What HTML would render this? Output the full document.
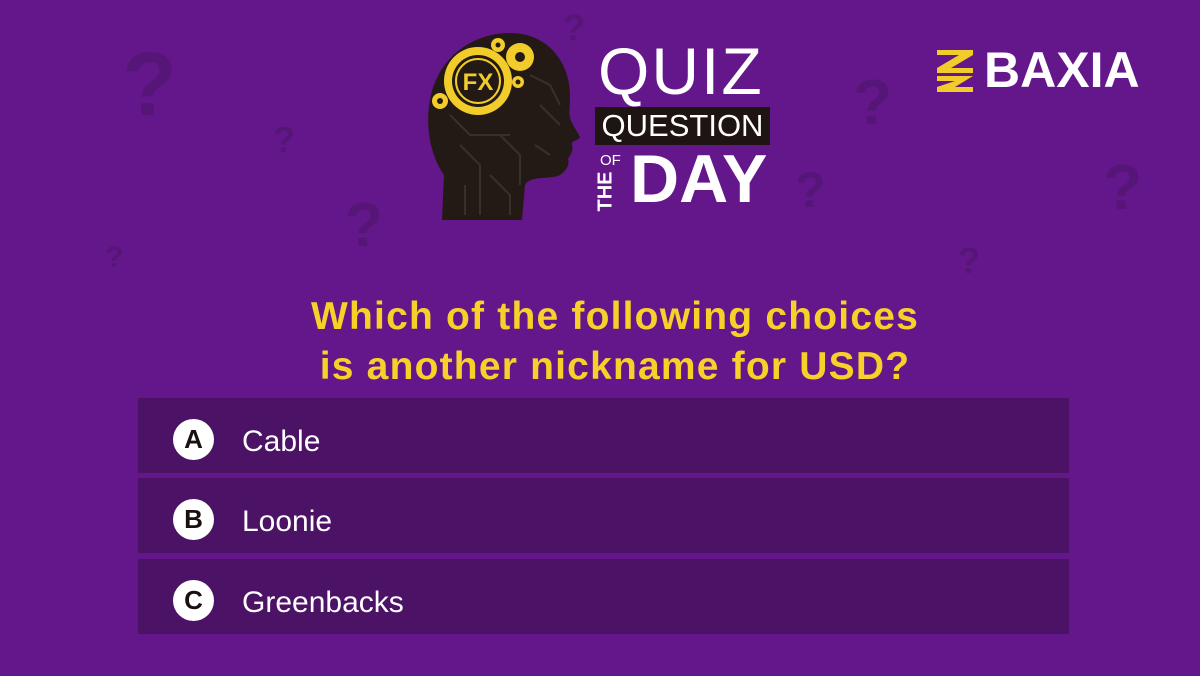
<!DOCTYPE html>
<html><head><meta charset="utf-8"><style>
*{margin:0;padding:0}
body{width:1200px;height:676px;background:#64178a;position:relative;overflow:hidden;font-family:"Liberation Sans",sans-serif}
.q{position:absolute;color:#551678;font-weight:bold;line-height:1}
.row{position:absolute;left:138px;width:931px;height:75px;background:#4c1266}
.c{position:absolute;left:35px;top:21px;width:41px;height:41px;border-radius:50%;background:#fff;color:#1a1010;font-weight:bold;font-size:26px;text-align:center;line-height:41px}
.t{position:absolute;left:104px;top:3px;line-height:82px;color:#fff;font-size:30px}
.qt{position:absolute;left:0;width:1230px;text-align:center;color:#f7d12a;font-weight:bold;font-size:39px;letter-spacing:1.2px;line-height:50px}
</style></head><body>
<div class="q" style="left:122px;top:40px;font-size:90px">?</div>
<div class="q" style="left:273px;top:122px;font-size:36px">?</div>
<div class="q" style="left:345px;top:195px;font-size:62px">?</div>
<div class="q" style="left:105px;top:243px;font-size:30px">?</div>
<div class="q" style="left:563px;top:10px;font-size:36px">?</div>
<div class="q" style="left:853px;top:70px;font-size:64px">?</div>
<div class="q" style="left:795px;top:165px;font-size:50px">?</div>
<div class="q" style="left:1103px;top:155px;font-size:64px">?</div>
<div class="q" style="left:958px;top:243px;font-size:36px">?</div>

<svg style="position:absolute;left:420px;top:25px" width="170" height="200" viewBox="0 0 170 200">
<path d="M22 195 L24 150 C10 130 5 100 10 75 C18 30 55 8 90 8 C130 8 150 40 150 70 C150 85 148 90 152 98 L160 112 C158 116 150 116 152 120 C154 126 150 130 148 134 C150 140 146 146 140 150 C130 155 110 150 105 160 L102 195 Z" fill="#231a16"/>
<g stroke="#3a302a" stroke-width="2" fill="none">
<path d="M40 120 L60 140 L60 190 M80 110 L100 130 L100 160 M120 80 L140 100 M30 90 L50 110 L90 110 M70 150 L90 170 L90 190 M110 50 L130 60 L140 80 M45 160 L45 190 M115 120 L130 130"/>
</g>
<g fill="#f2cc2a">
<circle cx="58" cy="56" r="34"/><circle cx="58" cy="56" r="26" fill="#231a16"/><circle cx="58" cy="56" r="22" fill="none" stroke="#f2cc2a" stroke-width="2"/>
<circle cx="100" cy="32" r="14"/><circle cx="100" cy="32" r="5" fill="#231a16"/>
<circle cx="78" cy="20" r="7"/><circle cx="78" cy="20" r="2.5" fill="#231a16"/>
<circle cx="98" cy="57" r="6"/><circle cx="98" cy="57" r="2.5" fill="#231a16"/>
<circle cx="20" cy="76" r="8"/><circle cx="20" cy="76" r="3" fill="#231a16"/>
</g>
<text x="58" y="65" text-anchor="middle" font-family="Liberation Sans" font-weight="bold" font-size="24" fill="#f2cc2a">FX</text>
</svg>
<div style="position:absolute;left:598px;top:36px;color:#fff;font-size:66px;line-height:70px;letter-spacing:2px;font-weight:normal">QUIZ</div>
<div style="position:absolute;left:595px;top:107px;width:175px;height:38px;background:#1e1412;color:#fff;font-size:31px;line-height:38px;text-align:center">QUESTION</div>
<div style="position:absolute;left:596px;top:152px;width:30px;height:56px">
<div style="position:absolute;left:4px;top:0;color:#fff;font-size:15px">OF</div>
<div style="position:absolute;left:-10px;top:28px;color:#fff;font-size:20px;font-weight:bold;transform:rotate(-90deg)">THE</div>
</div>
<div style="position:absolute;left:630px;top:142px;color:#fff;font-size:68px;font-weight:bold;line-height:74px">DAY</div>

<svg style="position:absolute;left:935px;top:50px" width="40" height="42" viewBox="0 0 40 42">
<path d="M2 0 H38 V5 L16 18 H38 V23 H2 V18 L24 5 H2 Z M2 26 H38 L20 37 H38 V42 H2 V37 L20 31 H2 Z" fill="#f2cc2a"/>
</svg>
<div style="position:absolute;left:984px;top:43px;color:#fff;font-size:50px;font-weight:bold;line-height:54px">BAXIA</div>

<div class="qt" style="top:292px">Which of the following choices</div>
<div class="qt" style="top:342px">is another nickname for USD?</div>

<div class="row" style="top:398px"><div class="c">A</div><div class="t">Cable</div></div>
<div class="row" style="top:478px"><div class="c">B</div><div class="t">Loonie</div></div>
<div class="row" style="top:559px"><div class="c">C</div><div class="t">Greenbacks</div></div>
</body></html>
